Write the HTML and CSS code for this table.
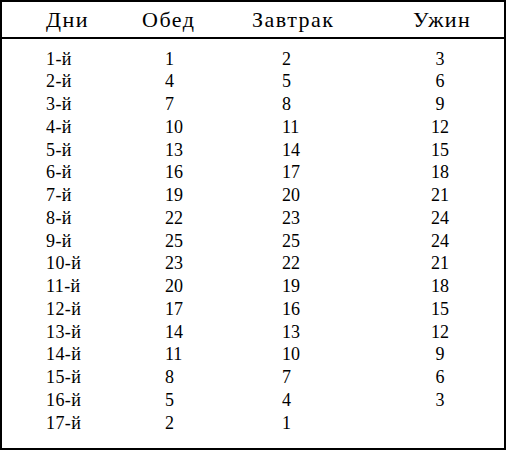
FILE: index.html
```html
<!DOCTYPE html>
<html lang="ru">
<head>
<meta charset="utf-8">
<title>Дни</title>
<link rel="stylesheet" href="styles.css">
</head>
<body>
<div class="sheet">
  <div class="row head">
    <div class="c1">Дни</div>
    <div class="c2">Обед</div>
    <div class="c3">Завтрак</div>
    <div class="c4">Ужин</div>
  </div>
  <div class="body">
    <div class="row t1"><div class="c1">1-й</div><div class="c2">1</div><div class="c3">2</div><div class="c4">3</div></div>
    <div class="row t2"><div class="c1">2-й</div><div class="c2">4</div><div class="c3">5</div><div class="c4">6</div></div>
    <div class="row t3"><div class="c1">3-й</div><div class="c2">7</div><div class="c3">8</div><div class="c4">9</div></div>
    <div class="row t4"><div class="c1">4-й</div><div class="c2">10</div><div class="c3">11</div><div class="c4">12</div></div>
    <div class="row t5"><div class="c1">5-й</div><div class="c2">13</div><div class="c3">14</div><div class="c4">15</div></div>
    <div class="row t6"><div class="c1">6-й</div><div class="c2">16</div><div class="c3">17</div><div class="c4">18</div></div>
    <div class="row t7"><div class="c1">7-й</div><div class="c2">19</div><div class="c3">20</div><div class="c4">21</div></div>
    <div class="row t8"><div class="c1">8-й</div><div class="c2">22</div><div class="c3">23</div><div class="c4">24</div></div>
    <div class="row t9"><div class="c1">9-й</div><div class="c2">25</div><div class="c3">25</div><div class="c4">24</div></div>
    <div class="row t10"><div class="c1">10-й</div><div class="c2">23</div><div class="c3">22</div><div class="c4">21</div></div>
    <div class="row t11"><div class="c1">11-й</div><div class="c2">20</div><div class="c3">19</div><div class="c4">18</div></div>
    <div class="row t12"><div class="c1">12-й</div><div class="c2">17</div><div class="c3">16</div><div class="c4">15</div></div>
    <div class="row t13"><div class="c1">13-й</div><div class="c2">14</div><div class="c3">13</div><div class="c4">12</div></div>
    <div class="row t14"><div class="c1">14-й</div><div class="c2">11</div><div class="c3">10</div><div class="c4">9</div></div>
    <div class="row t15"><div class="c1">15-й</div><div class="c2">8</div><div class="c3">7</div><div class="c4">6</div></div>
    <div class="row t16"><div class="c1">16-й</div><div class="c2">5</div><div class="c3">4</div><div class="c4">3</div></div>
    <div class="row t17"><div class="c1">17-й</div><div class="c2">2</div><div class="c3">1</div><div class="c4"></div></div>
  </div>
</div>
</body>
</html>
```
FILE: styles.css
```css
html, body {
  margin: 0;
  padding: 0;
  background: #fff;
}

body { font-family: Liberation Serif; }

.sheet {
  width: 506px;
  height: 450px;
  box-sizing: border-box;
  border: 2px solid #000;
  color: #000;
}

.row {
  display: grid;
  grid-template-columns: 138px 110px 150px 104px;
}

.head div { font-family: Liberation Serif; }
.t1 div { font-family: Liberation Serif; }
.t2 div { font-family: "Liberation Serif"; }
.t3 div { font-family: 'Liberation Serif'; }
.t4 div { font-family: Liberation Serif; }
.t5 div { font-family: Liberation Serif; }
.t6 div { font-family: Liberation Serif; }
.t7 div { font-family: Liberation Serif; }
.t8 div { font-family: Liberation Serif; }
.t9 div { font-family: Liberation Serif; }
.t10 div { font-family: Liberation Serif; }
.t11 div { font-family: Liberation Serif; }
.t12 div { font-family: Liberation Serif; }
.t13 div { font-family: Liberation Serif; }
.t14 div { font-family: Liberation Serif; }
.t15 div { font-family: Liberation Serif; }
.t16 div { font-family: Liberation Serif; }
.t17 div { font-family: Liberation Serif; }

.head {
  height: 37px;
  box-sizing: border-box;
  border-bottom: 2px solid #000;
  font-size: 22px;
  line-height: 24px;
  letter-spacing: 1.5px;
  padding-top: 6px;
}

.head .c1 { padding-left: 44px; }
.head .c2 { padding-left: 2px; }
.head .c3 { padding-left: 2px; }
.head .c4 { padding-left: 13px; }

.body {
  padding-top: 8.5px;
  font-size: 18px;
  line-height: 22.75px;
}

.body .c1 { padding-left: 44px; letter-spacing: 0.4px; }
.body .c2 { padding-left: 25px; }
.body .c3 { padding-left: 32px; }
.body .c4 { text-align: center; padding-right: 24px; }
```
